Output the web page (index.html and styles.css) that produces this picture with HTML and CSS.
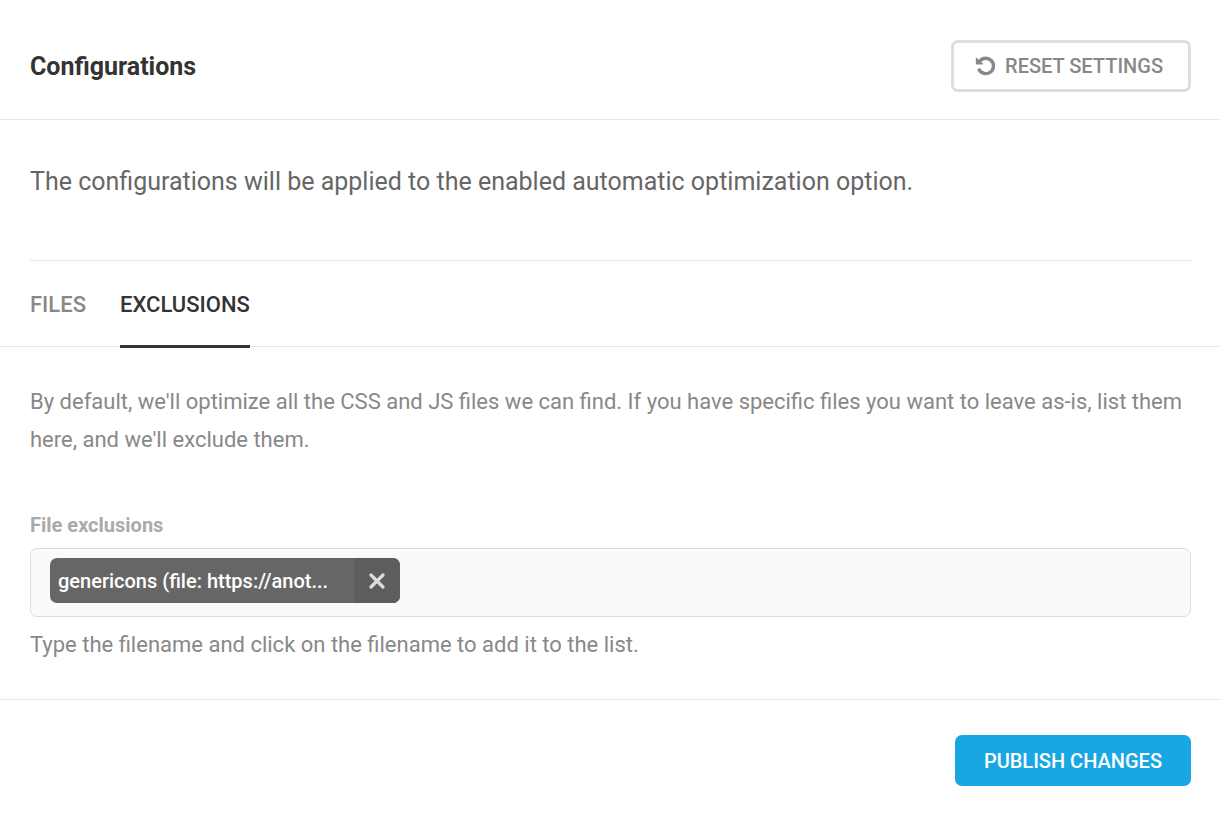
FILE: index.html
```html
<!DOCTYPE html>
<html lang="en">
<head>
<meta charset="utf-8">
<meta name="viewport" content="width=device-width, initial-scale=1">
<title>Configurations</title>
<link rel="stylesheet" href="styles.css">
</head>
<body>
<main class="box">
  <header class="box-header">
    <h1 class="box-title">Configurations</h1>
    <button type="button" class="button button-ghost">
      <svg class="icon-undo" viewBox="0 0 20 20" aria-hidden="true">
        <path d="M4.2 5.2A7.7 7.7 0 1 1 3.7 13.9" fill="none" stroke="currentColor" stroke-width="3.4" stroke-linecap="round"/>
        <path d="M0.3 1.9Q0.3 1.1 1 1.7L7.2 7.2Q8 8.3 6.8 8.4H1.4Q0.4 8.4 0.3 7.4Z" fill="currentColor"/>
      </svg>
      RESET SETTINGS
    </button>
  </header>
  <section class="box-body">
    <p class="intro">The configurations will be applied to the enabled automatic optimization option.</p>
    <div class="tabs" role="tablist">
      <button type="button" class="tab" role="tab" aria-selected="false">FILES</button>
      <button type="button" class="tab tab-active" role="tab" aria-selected="true">EXCLUSIONS</button>
    </div>
    <div class="panel" role="tabpanel">
      <p class="description">By default, we'll optimize all the CSS and JS files we can find. If you have specific files you want to leave as-is, list them here, and we'll exclude them.</p>
      <label class="label" for="exclusions">File exclusions</label>
      <div class="field">
        <span class="chip">
          <span class="chip-text">genericons (file: https://anot...</span>
          <button type="button" class="chip-remove" aria-label="Remove genericons">
            <svg class="icon-close" viewBox="0 0 16 16" aria-hidden="true">
              <path d="M2 2L14 14M14 2L2 14" fill="none" stroke="currentColor" stroke-width="3.2" stroke-linecap="round"/>
            </svg>
          </button>
        </span>
        <input class="field-input" id="exclusions" type="text">
      </div>
      <p class="hint">Type the filename and click on the filename to add it to the list.</p>
    </div>
  </section>
  <footer class="box-footer">
    <button type="button" class="button button-blue">PUBLISH CHANGES</button>
  </footer>
</main>
</body>
</html>
```
FILE: styles.css
```css
* { box-sizing: border-box; }

body {
  margin: 0;
  background: #fff;
  color: #888;
  font-family: Roboto, "Liberation Sans", sans-serif;
  font-size: 22px;
  line-height: 38px;
}

h1, p { margin: 0; }

button, input { font: inherit; }

.box-header {
  display: flex;
  align-items: center;
  justify-content: space-between;
  padding: 40px 29px 27px 30px;
  border-bottom: 1px solid #e6e6e6;
}

.box-title {
  padding-top: 2px;
  color: #333;
  font-size: 25px;
  font-weight: 700;
  line-height: 50px;
}

.button {
  display: inline-flex;
  align-items: center;
  gap: 9px;
  border: 0;
  border-radius: 7px;
  font-size: 20px;
  font-weight: 500;
  line-height: 28px;
  cursor: pointer;
}

.button-ghost {
  padding: 9px 25px 9px 21px;
  border: 3px solid #ddd;
  background: transparent;
  color: #888;
}

.icon-undo {
  width: 21px;
  height: 20px;
}

.box-body { padding: 43px 29px 35px 30px; }

.intro {
  padding-bottom: 59px;
  border-bottom: 1px solid #e6e6e6;
  color: #666;
  font-size: 25px;
}

.tabs {
  display: flex;
  gap: 34px;
  margin: 0 -29px 0 -30px;
  padding: 0 30px;
  border-bottom: 1px solid #e6e6e6;
}

.tab {
  margin-bottom: -2px;
  padding: 25px 0 21px;
  border: 0;
  border-bottom: 3px solid transparent;
  background: none;
  color: #888;
  font-weight: 500;
  cursor: pointer;
}

.tab-active {
  border-bottom-color: #333;
  color: #333;
}

.description { padding-top: 36px; }

.label {
  display: block;
  margin-top: 51px;
  color: #aaa;
  font-size: 20px;
  font-weight: 700;
  line-height: 30px;
}

.field {
  display: flex;
  margin-top: 8px;
  padding: 9px 19px 13px;
  border: 1px solid #ddd;
  border-radius: 7px;
  background: #fafafa;
}

.chip {
  display: flex;
  flex: none;
  overflow: hidden;
  width: 350px;
  height: 45px;
  border-radius: 7px;
  background: #666;
  color: #fff;
  font-size: 20px;
  font-weight: 500;
  line-height: 46px;
}

.chip-text {
  flex: 1;
  padding-left: 8px;
  white-space: nowrap;
}

.chip-remove {
  display: flex;
  align-items: center;
  justify-content: center;
  width: 46px;
  padding: 0;
  border: 0;
  background: #5d5d5d;
  color: #ddd;
  cursor: pointer;
}

.icon-close {
  width: 16px;
  height: 16px;
}

.field-input {
  flex: 1;
  min-width: 0;
  border: 0;
  outline: 0;
  background: transparent;
  color: #666;
}

.hint { margin-top: 9px; }

.box-footer {
  display: flex;
  justify-content: flex-end;
  padding: 35px 29px 42px;
  border-top: 1px solid #e6e6e6;
}

.button-blue {
  padding: 12px 29px 11px;
  background: #18a7e3;
  color: #fff;
}
```
